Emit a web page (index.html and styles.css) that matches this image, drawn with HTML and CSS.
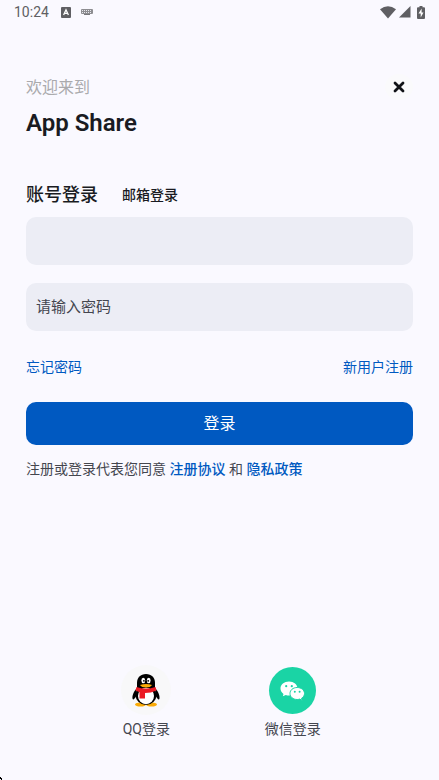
FILE: index.html
```html
<!DOCTYPE html>
<html lang="zh-CN">
<head>
  <meta charset="UTF-8">
  <meta name="viewport" content="width=device-width, initial-scale=1.0">
  <title>App Share</title>
  <link rel="stylesheet" href="styles.css">
</head>
<body>
  <div class="screen">
    <div class="status-bar">
      <span class="time">10:24</span>
      <svg class="ime" width="10" height="11" viewBox="0 0 10 11">
        <rect width="10" height="11" rx="1" fill="#5f5f63"/>
        <path d="M2.6 8 5 2.8 7.4 8M3.5 6.4h3" fill="none" stroke="#fff" stroke-width="1.3"/>
      </svg>
      <svg class="keyboard" width="12" height="7" viewBox="0 0 12 7">
        <rect width="12" height="5" rx="1" fill="#8d8d91"/>
        <path d="M1 1.5h10M1 3.5h10" stroke="#e8e8ee" stroke-width="1" stroke-dasharray="1 1"/>
        <path d="M3 5.5h6" stroke="#77777b" stroke-width="1"/>
      </svg>
      <div class="status-right">
        <svg width="16" height="13" viewBox="0 0 16 13"><path d="M0 3.2Q8-2.6 16 3.2L8 12.6z" fill="#5f5f63"/></svg>
        <svg width="12" height="12" viewBox="0 0 12 12"><path d="M11.5 0v11.5H0z" fill="#5f5f63"/></svg>
        <svg class="battery" width="8" height="13" viewBox="0 0 8 13">
          <path d="M2.5 0h3v1.2H7q1 0 1 1V12q0 1-1 1H1q-1 0-1-1V2.2q0-1 1-1h1.5z" fill="#5f5f63"/>
          <path d="M4.6 2.500 1.500 7.600h2.200V11.500l2.800-5.100H4.600z" fill="#fff"/>
        </svg>
      </div>
    </div>

    <main class="content">
      <header class="header">
        <div>
          <p class="welcome">欢迎来到</p>
          <h1>App Share</h1>
        </div>
        <button type="button" class="close" aria-label="关闭">
          <svg width="12" height="12" viewBox="0 0 12 12"><path d="M2 2l8 8M10 2l-8 8" stroke="#111318" stroke-width="2.8" stroke-linecap="round"/></svg>
        </button>
      </header>

      <form class="login">
        <div class="tabs">
          <button type="button" class="tab active">账号登录</button>
          <button type="button" class="tab">邮箱登录</button>
        </div>
        <input class="field" type="text" name="account" aria-label="账号">
        <input class="field" type="password" name="password" aria-label="密码" placeholder="请输入密码">
        <div class="links">
          <a href="#">忘记密码</a>
          <a href="#">新用户注册</a>
        </div>
        <button type="submit" class="submit">登录</button>
        <p class="terms">注册或登录代表您同意 <a href="#">注册协议</a> 和 <a href="#">隐私政策</a></p>
      </form>
    </main>

    <footer class="social">
      <button type="button" class="social-item">
        <span class="circle qq">
          <svg width="28" height="34" viewBox="0 0 28 34">
            <ellipse cx="8.5" cy="31.5" rx="5.5" ry="2" fill="#faab07"/>
            <ellipse cx="19.5" cy="31.5" rx="5.5" ry="2" fill="#faab07"/>
            <path d="M5 15C2 18 0 22.5.5 25.500 1 27.500 2.500 26 4 23.500zM23 15c3 3 5 7.500 4.500 10.500-.5 2-2 .5-3.500-2z" fill="#000"/>
            <ellipse cx="14" cy="22" rx="10.5" ry="10" fill="#000"/>
            <path d="M5 15V10C5 4.500 8.500 1 14 1s9 3.500 9 9v6z" fill="#000"/>
            <ellipse cx="14" cy="23" rx="8" ry="8.3" fill="#fff"/>
            <ellipse cx="11.3" cy="7.5" rx="1.9" ry="2.7" fill="#fff"/>
            <ellipse cx="16.7" cy="7.5" rx="1.9" ry="2.7" fill="#fff"/>
            <circle cx="11.9" cy="7.8" r=".9" fill="#000"/>
            <circle cx="16.2" cy="7.8" r=".9" fill="#000"/>
            <path d="M8 12q6-2 12 0-1.500 2.500-6 2.500T8 12z" fill="#faab07"/>
            <path d="M4.500 14q9.500 3 19 0l1 3.500q-5.500 2.500-11.500 2.500v5.500H7.500v-6.300L3.500 17.500z" fill="#eb1923"/>
          </svg>
        </span>
        <span>QQ登录</span>
      </button>
      <button type="button" class="social-item">
        <span class="circle wechat">
          <svg width="25" height="20" viewBox="0 0 25 20">
            <path d="M9 .5C4.200.5.500 3.600.5 7.500c0 2.200 1.100 4.100 3 5.400L2.800 15.300l3-1.400q1.500.5 3.200.5C13.800 14.400 17.500 11.300 17.500 7.400S13.800.500 9 .500z" fill="#fff"/>
            <path d="M17.200 6.500c-4.200 0-7.200 2.600-7.200 6s3 6 7.200 6q1.300 0 2.500-.4l2.500 1.300-.6-2.200C23.400 16.100 24.500 14.500 24.500 12.500c0-3.400-3.200-6-7.300-6z" fill="#fff" stroke="#1ad4a5" stroke-width="1"/>
            <g fill="#1ad4a5">
              <circle cx="6.2" cy="5.2" r="1.1"/><circle cx="11.8" cy="5.2" r="1.1"/>
              <circle cx="14.8" cy="10.8" r="1"/><circle cx="19.6" cy="10.8" r="1"/>
            </g>
          </svg>
        </span>
        <span>微信登录</span>
      </button>
    </footer>
    <svg class="corner" width="3" height="3" viewBox="0 0 3 3"><path d="M0 0h1v1h1v2H1V2H0z" fill="#000"/></svg>
  </div>
</body>
</html>
```
FILE: styles.css
```css
* {
  box-sizing: border-box;
}
body {
  margin: 0;
  font-family: Roboto, "Noto Sans CJK SC", sans-serif;
  font-size: 14px;
  line-height: 20px;
  background: #faf9ff;
  color: #44464f;
}
button, input {
  font: inherit;
  border: none;
}
button {
  padding: 0;
  background: none;
  color: inherit;
  cursor: pointer;
}
a {
  color: #0059c1;
  text-decoration: none;
}
svg {
  display: block;
}
p, h1 {
  margin: 0;
}
.screen {
  position: relative;
  display: flex;
  flex-direction: column;
  min-height: 100vh;
}
.status-bar {
  display: flex;
  align-items: center;
  height: 24px;
  padding: 0 14px;
  color: #5f5f63;
}
.ime {
  margin-left: 12px;
}
.keyboard {
  margin-left: 10px;
}
.status-right {
  display: flex;
  align-items: center;
  gap: 3px;
  margin-left: auto;
}
.battery {
  margin-left: 3px;
}
.content {
  padding: 50px 26px 0;
}
.header {
  display: flex;
  justify-content: space-between;
  align-items: flex-start;
}
.welcome {
  font-size: 16px;
  line-height: 28px;
  color: #aaaaad;
}
h1 {
  margin-top: 5px;
  font-size: 24px;
  line-height: 32px;
  font-weight: 600;
  color: #191b22;
}
.close {
  display: flex;
  align-items: center;
  justify-content: center;
  width: 28px;
  height: 26px;
  border-radius: 50%;
  background: #fafafc;
}
.tabs {
  display: flex;
  align-items: center;
  gap: 24px;
  margin-top: 44px;
}
.tab {
  line-height: 24px;
  font-weight: 500;
  color: #191b22;
}
.tab.active {
  font-size: 18px;
}
.field {
  display: block;
  width: 100%;
  height: 48px;
  margin-top: 18px;
  padding: 0 10px;
  border-radius: 10px;
  background: #ecedf5;
  color: #191b22;
  font-size: 15px;
  outline: none;
}
.tabs + .field {
  margin-top: 10px;
}
.field::placeholder {
  color: #44464f;
  opacity: 1;
}
.links {
  display: flex;
  justify-content: space-between;
  margin-top: 26px;
}
.submit {
  display: block;
  width: 100%;
  height: 43px;
  margin-top: 25px;
  border-radius: 10px;
  background: #0059c1;
  color: #fff;
  font-size: 16px;
}
.terms {
  margin-top: 14px;
}
.terms a {
  font-weight: 500;
}
.social {
  display: flex;
  justify-content: space-evenly;
  margin-top: auto;
  padding: 24px 0 41px;
}
.social-item {
  display: flex;
  flex-direction: column;
  align-items: center;
  justify-content: flex-end;
  width: 0;
  white-space: nowrap;
}
.circle {
  display: flex;
  align-items: center;
  justify-content: center;
  border-radius: 50%;
}
.qq {
  width: 50px;
  height: 50px;
  margin-bottom: 4px;
  background: #f8f8f9;
}
.wechat {
  width: 47px;
  height: 47px;
  margin-bottom: 5px;
  background: #1ad4a5;
}
.corner {
  position: absolute;
  left: 0;
  bottom: 0;
}
```
